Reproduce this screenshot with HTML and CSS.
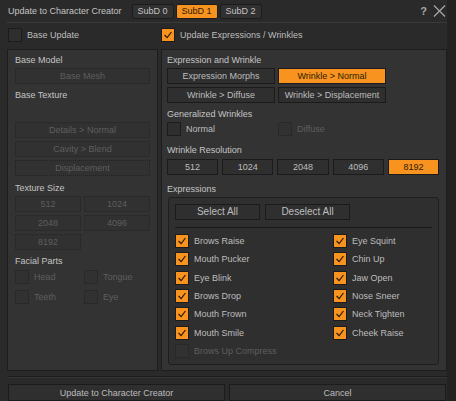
FILE: index.html
```html
<!DOCTYPE html>
<html lang="en">
<head>
    <meta charset="UTF-8">
    <title>Update to Character Creator</title>
    <link rel="stylesheet" href="styles.css">
</head>
<body>
    <div class="dialog">
        <div class="titlebar">
            <span class="title">Update to Character Creator</span>
            <div class="tabs">
                <button class="tab">SubD 0</button>
                <button class="tab on">SubD 1</button>
                <button class="tab">SubD 2</button>
            </div>
            <span class="help">?</span>
            <svg class="close" width="13" height="12" viewBox="0 0 13 12">
                <path d="M1 0.5 L12 11.5 M12 0.5 L1 11.5" stroke="#a8a8a8" stroke-width="1.2" fill="none"/>
            </svg>
        </div>

        <div class="options">
            <label class="check"><span class="box"></span>Base Update</label>
            <label class="check"><span class="box on"><svg viewBox="0 0 14 14"><path d="M3 7 L6 10 L11 3.5"/></svg></span>Update Expressions / Wrinkles</label>
        </div>

        <div class="panels">
            <!-- base update side, all disabled -->
            <div class="panel side">
                <div class="lbl">Base Model</div>
                <button class="btn off mt1">Base Mesh</button>
                <div class="lbl mt4">Base Texture</div>
                <button class="btn off mt20">Details &gt; Normal</button>
                <button class="btn off mt3">Cavity &gt; Blend</button>
                <button class="btn off focus mt3">Displacement</button>
                <div class="lbl mt5">Texture Size</div>
                <div class="sizes mt1">
                    <button class="btn off">512</button>
                    <button class="btn off">1024</button>
                    <button class="btn off">2048</button>
                    <button class="btn off">4096</button>
                    <button class="btn off focus">8192</button>
                </div>
                <div class="lbl mt4">Facial Parts</div>
                <div class="parts">
                    <label class="check off"><span class="box"></span>Head</label>
                    <label class="check off"><span class="box"></span>Tongue</label>
                    <label class="check off"><span class="box"></span>Teeth</label>
                    <label class="check off"><span class="box"></span>Eye</label>
                </div>
            </div>

            <!-- expressions side -->
            <div class="panel main">
                <div class="lbl">Expression and Wrinkle</div>
                <div class="pair mt1">
                    <button class="btn">Expression Morphs</button>
                    <button class="btn on">Wrinkle &gt; Normal</button>
                    <button class="btn">Wrinkle &gt; Diffuse</button>
                    <button class="btn">Wrinkle &gt; Displacement</button>
                </div>
                <div class="lbl mt4">Generalized Wrinkles</div>
                <div class="pair mt1">
                    <label class="check"><span class="box"></span>Normal</label>
                    <label class="check off"><span class="box"></span>Diffuse</label>
                </div>
                <div class="lbl mt7">Wrinkle Resolution</div>
                <div class="res mt2">
                    <button class="btn">512</button>
                    <button class="btn">1024</button>
                    <button class="btn">2048</button>
                    <button class="btn">4096</button>
                    <button class="btn on">8192</button>
                </div>
                <div class="lbl mt7">Expressions</div>
                <div class="group mt1">
                    <div class="group-actions">
                        <button class="btn big">Select All</button>
                        <button class="btn big">Deselect All</button>
                    </div>
                    <div class="group-rule"></div>
                    <div class="expr-list" id="expr-list"></div>
                </div>
            </div>
        </div>

        <div class="rule"></div>

        <div class="actions">
            <button class="btn">Update to Character Creator</button>
            <button class="btn">Cancel</button>
        </div>
    </div>

    <script>
        // expression list: [name, checked, enabled]
        const expressions = [
            ['Brows Raise', true, true], ['Eye Squint', true, true],
            ['Mouth Pucker', true, true], ['Chin Up', true, true],
            ['Eye Blink', true, true], ['Jaw Open', true, true],
            ['Brows Drop', true, true], ['Nose Sneer', true, true],
            ['Mouth Frown', true, true], ['Neck Tighten', true, true],
            ['Mouth Smile', true, true], ['Cheek Raise', true, true],
            ['Brows Up Compress', false, false]
        ];

        const list = document.getElementById('expr-list');
        expressions.forEach(([name, checked, enabled]) => {
            const item = document.createElement('label');
            item.className = 'check' + (enabled ? '' : ' off');
            const box = document.createElement('span');
            box.className = 'box' + (checked ? ' on' : '');
            if (checked) {
                box.innerHTML = '<svg viewBox="0 0 14 14"><path d="M3 7 L6 10 L11 3.5"/></svg>';
            }
            item.appendChild(box);
            item.appendChild(document.createTextNode(name));
            list.appendChild(item);
        });
    </script>
</body>
</html>
```

FILE: styles.css
```css
body {
    margin: 0;
    background-color: #222222;
    font-family: "Liberation Sans", Arial, sans-serif;
    font-size: 9px;
    color: #bdbdbd;
}

.dialog {
    width: 447px;
    height: 401px;
    padding-left: 7px;
    box-sizing: border-box;
    background-color: #2a2a2a;
    overflow: hidden;
}

.titlebar {
    height: 22px;
    display: flex;
    align-items: center;
    padding: 0 1px;
    border-bottom: 1px solid #3a3a3a;
}

.title {
    color: #c4c4c4;
}

.tabs {
    display: flex;
    gap: 2px;
    margin-left: 10px;
}

.tab {
    width: 42px;
    height: 15px;
    padding: 0;
    font: inherit;
    color: #c4c4c4;
    background-color: #313131;
    border: 1px solid #1c1c1c;
    border-radius: 2px;
}

.tab.on {
    background-color: #f7931e;
    color: #2e1c05;
}

.help {
    margin-left: auto;
    font-size: 11px;
    font-weight: bold;
    color: #a5a5a5;
}

.close {
    margin-left: 6px;
}

.options {
    height: 26px;
    display: grid;
    grid-template-columns: 153px 1fr;
    padding: 5px 0 0 1px;
    box-sizing: border-box;
}

.check {
    display: flex;
    align-items: flex-start;
    gap: 5px;
    line-height: 14px;
    color: #bdbdbd;
}

.box {
    width: 14px;
    height: 14px;
    flex: none;
    box-sizing: border-box;
    background-color: #2e2e2e;
    border: 1px solid #1c1c1c;
}

.box.on {
    background-color: #f7931e;
}

.box svg {
    display: block;
    width: 12px;
    height: 12px;
}

.box svg path {
    fill: none;
    stroke: #2a1804;
    stroke-width: 1.4;
}

.check.off {
    color: #5e5e5e;
}

.check.off .box {
    background-color: #313131;
    border-color: #292929;
}

.panels {
    display: flex;
    gap: 3px;
    height: 322px;
}

.panel {
    background-color: #333333;
    border: 1px solid #1d1d1d;
    box-sizing: border-box;
    padding-top: 3px;
}

.side {
    width: 151px;
    padding-left: 7px;
    padding-right: 7px;
}

.main {
    flex: 1;
    padding-left: 5px;
    padding-right: 7px;
}

.lbl {
    height: 14px;
    line-height: 14px;
    color: #c4c4c4;
}

.btn {
    display: block;
    width: 100%;
    height: 16px;
    padding: 0;
    box-sizing: border-box;
    font: inherit;
    line-height: 14px;
    text-align: center;
    color: #bdbdbd;
    background-color: #2f2f2f;
    border: 1px solid #1b1b1b;
}

.btn.on {
    background-color: #f7931e;
    color: #2e1c05;
}

.btn.off {
    color: #5e5e5e;
    background-color: #313131;
    border-color: #2a2a2a;
}

/* keyboard focus rectangle */
.btn.focus {
    border: 1px dotted #232323;
}

.btn.big {
    font-size: 10px;
    width: 85px;
}

.mt1 { margin-top: 1px; }
.mt2 { margin-top: 2px; }
.mt3 { margin-top: 3px; }
.mt4 { margin-top: 4px; }
.mt5 { margin-top: 5px; }
.mt7 { margin-top: 7px; }
.mt20 { margin-top: 20px; }

.sizes {
    display: grid;
    grid-template-columns: 1fr 1fr;
    gap: 3px 3px;
}

.parts {
    display: grid;
    grid-template-columns: 69px 1fr;
    row-gap: 6px;
    margin-top: 2px;
}

.pair {
    display: grid;
    grid-template-columns: 108px 108px;
    gap: 3px;
}

.res {
    display: grid;
    grid-template-columns: repeat(5, 1fr);
    gap: 4px;
}

.group {
    height: 168px;
    box-sizing: border-box;
    margin-left: 1px;
    border: 1px solid #1e1e1e;
    border-radius: 3px;
    background-color: #2f2f2f;
    padding: 6px 6px 0 6px;
}

.group-actions {
    display: flex;
    gap: 5px;
}

.group-rule {
    height: 1px;
    margin-top: 7px;
    background-color: #1a1a1a;
}

.expr-list {
    display: grid;
    grid-template-columns: 158px 1fr;
    grid-auto-rows: 18.33px;
    margin-top: 6px;
}

.rule {
    margin-top: 5px;
    height: 1px;
    background-color: #1c1c1c;
    border-bottom: 1px solid #363636;
}

.actions {
    display: grid;
    grid-template-columns: 1fr 1fr;
    gap: 4px;
    margin-top: 6px;
    padding: 0 1px;
}

.actions .btn {
    height: 17px;
}
```
